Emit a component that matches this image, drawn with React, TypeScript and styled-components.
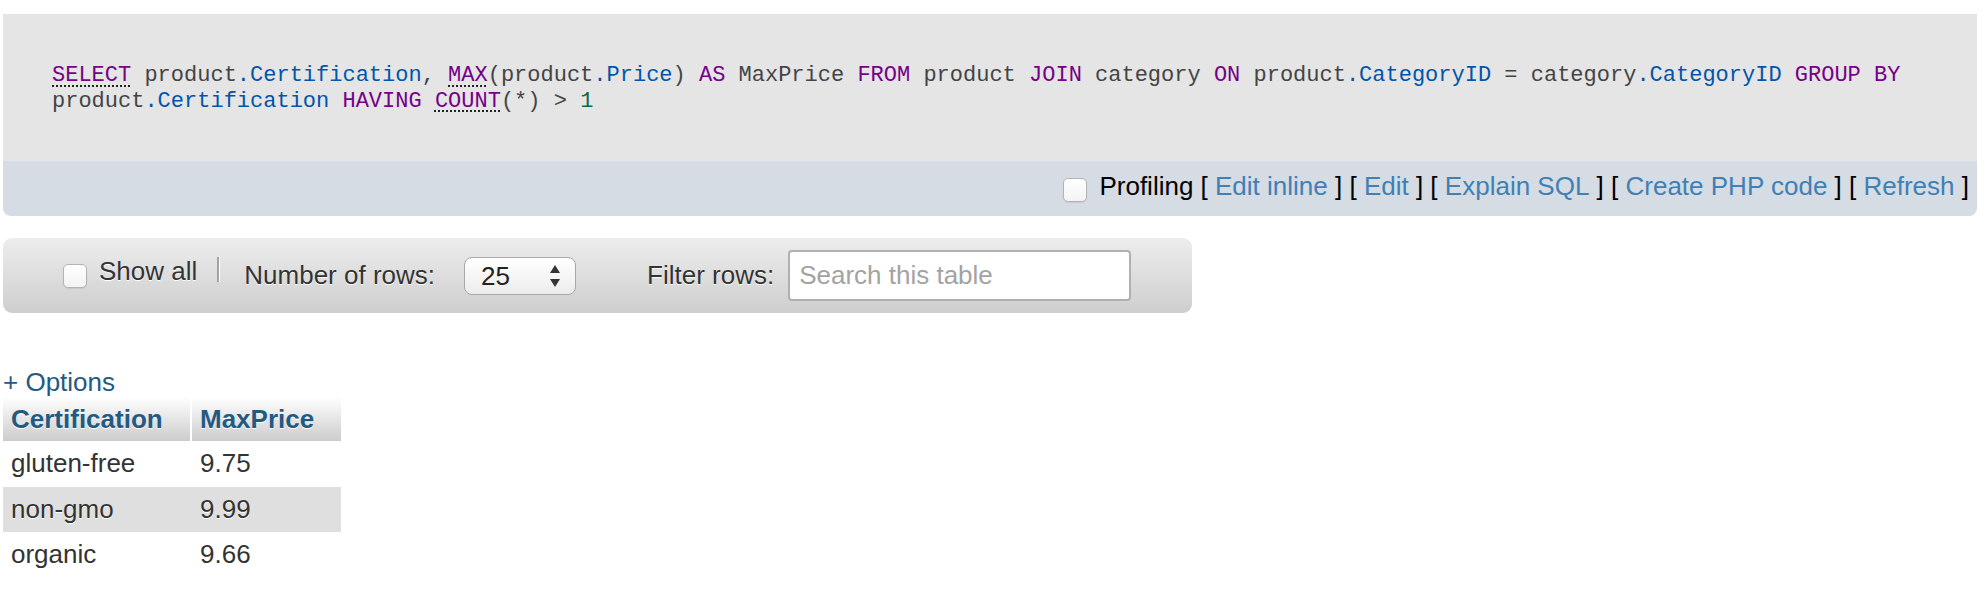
import React from "react";
import styled, { createGlobalStyle } from "styled-components";

const Global = createGlobalStyle`
  html, body { margin: 0; padding: 0; background: #fff; }
  body { font-family: "Liberation Sans", Arial, sans-serif; color: #333; }
`;

const Page = styled.div`
  padding: 14px 11px 0 3px;
`;

const SqlBox = styled.div`
  border-radius: 0 0 8px 8px;
  overflow: hidden;
`;

const Code = styled.div`
  background: #e5e5e5;
  height: 147px;
  box-sizing: border-box;
  padding: 49px 49px 0 49px;
  font-family: "Liberation Mono", "Courier New", monospace;
  font-size: 22px;
  line-height: 25.5px;
  color: #444;
`;

const Kw = styled.span<{ $doc?: boolean }>`
  color: #770088;
  ${(p) =>
    p.$doc
      ? `text-decoration: underline dotted #222; text-decoration-thickness: 2px; text-underline-offset: 4px;`
      : ""}
`;
const Field = styled.span`
  color: #0055aa;
`;
const Num = styled.span`
  color: #116644;
`;

const Tools = styled.div`
  background: #d5dce3;
  height: 55px;
  box-sizing: border-box;
  padding: 0 8px 4px 0;
  display: flex;
  align-items: center;
  justify-content: flex-end;
  font-size: 26px;
  color: #000;
  white-space: pre;
`;

const Check = styled.input.attrs({ type: "checkbox" })<{ $down?: number }>`
  appearance: none;
  -webkit-appearance: none;
  margin: ${(p) => p.$down ?? 0}px 12px 0 0;
  width: 24px;
  height: 24px;
  box-sizing: border-box;
  border: 1px solid #b3b3b3;
  border-radius: 5px;
  background: linear-gradient(#ffffff, #f3f3f3);
  box-shadow: 0 1px 1px rgba(0, 0, 0, 0.08);
  flex: none;
`;

const ToolLink = styled.a`
  color: #3f80b5;
  text-decoration: none;
  cursor: pointer;
`;

const Nav = styled.div`
  margin-top: 22px;
  width: 1189px;
  height: 75px;
  box-sizing: border-box;
  border-radius: 9px;
  background: linear-gradient(#ededed, #cecece);
  display: flex;
  align-items: center;
  padding-left: 60px;
  font-size: 26px;
  color: #333;
  text-shadow: 0 1px 0 #fff;
`;

const NavLabel = styled.span<{ $ml?: number; $up?: number }>`
  margin-left: ${(p) => p.$ml ?? 0}px;
  position: relative;
  top: ${(p) => -(p.$up ?? 0)}px;
  white-space: nowrap;
`;

const Sep = styled.span`
  margin-left: 20px;
  width: 2px;
  height: 25px;
  background: #a3a3a3;
  box-shadow: 1px 0 0 #fff;
  align-self: flex-start;
  margin-top: 19px;
`;

const SelectWrap = styled.div`
  margin-left: 29px;
  width: 112px;
  height: 38px;
  box-sizing: border-box;
  border: 1px solid #a8a8a8;
  border-radius: 8px;
  background: linear-gradient(#ffffff, #ececec);
  display: flex;
  align-items: center;
  padding: 0 14px 0 0;
`;

const Select = styled.select`
  appearance: none;
  -webkit-appearance: none;
  border: none;
  background: transparent;
  font-family: "Liberation Sans", Arial, sans-serif;
  font-size: 26px;
  color: #222;
  padding: 0 0 0 16px;
  flex: 1;
  min-width: 0;
  outline: none;
`;

const Search = styled.input`
  margin-left: 14px;
  width: 343px;
  height: 51px;
  box-sizing: border-box;
  border: 2px solid #b0b0b0;
  border-radius: 4px;
  background: #fff;
  font-family: "Liberation Sans", Arial, sans-serif;
  font-size: 26px;
  padding: 0 9px;
  color: #333;
  &::placeholder {
    color: #a3a3a3;
  }
`;

const Options = styled.a`
  display: block;
  margin-top: 55px;
  font-size: 26px;
  line-height: 29px;
  color: #235a81;
  text-decoration: none;
`;

const Table = styled.table`
  border-collapse: separate;
  border-spacing: 0;
  font-size: 26px;
`;

const Th = styled.th<{ $w: number; $sep?: boolean }>`
  width: ${(p) => p.$w}px;
  height: 44px;
  box-sizing: border-box;
  padding: 0 8px;
  text-align: left;
  font-weight: bold;
  color: #235a81;
  text-shadow: 0 1px 0 #fff;
  background: linear-gradient(#ffffff, #cccccc);
  border-right: ${(p) => (p.$sep ? "2px solid #fff" : "none")};
`;

const Tr = styled.tr<{ $odd?: boolean }>`
  background: ${(p) => (p.$odd ? "#dfdfdf" : "#fff")};
`;

const Td = styled.td`
  height: 45.6px;
  padding: 0 8px;
  color: #333;
  text-shadow: 0 1px 0 #fff;
`;

const Arrows = () => (
  <svg width="12" height="24" viewBox="0 0 12 24" aria-hidden="true">
    <polygon points="6,1 11,9 1,9" fill="#333" />
    <polygon points="1,15 11,15 6,23" fill="#333" />
  </svg>
);

const rows = [
  ["gluten-free", "9.75"],
  ["non-gmo", "9.99"],
  ["organic", "9.66"],
];

export default function App() {
  return (
    <>
      <Global />
      <Page>
        <SqlBox>
          <Code>
            <Kw $doc>SELECT</Kw> product<Field>.Certification</Field>, <Kw $doc>MAX</Kw>(product
            <Field>.Price</Field>) <Kw>AS</Kw> MaxPrice <Kw>FROM</Kw> product <Kw>JOIN</Kw> category{" "}
            <Kw>ON</Kw> product<Field>.CategoryID</Field> = category<Field>.CategoryID</Field>{" "}
            <Kw>GROUP BY</Kw> product<Field>.Certification</Field> <Kw>HAVING</Kw>{" "}
            <Kw $doc>COUNT</Kw>(*) &gt; <Num>1</Num>
          </Code>
          <Tools>
            <Check $down={6} />
            Profiling [ <ToolLink>Edit inline</ToolLink> ] [ <ToolLink>Edit</ToolLink> ] [{" "}
            <ToolLink>Explain SQL</ToolLink> ] [ <ToolLink>Create PHP code</ToolLink> ] [{" "}
            <ToolLink>Refresh</ToolLink> ]
          </Tools>
        </SqlBox>
        <Nav>
          <Check />
          <NavLabel $up={4}>Show all</NavLabel>
          <Sep />
          <NavLabel $ml={25}>Number of rows:</NavLabel>
          <SelectWrap>
            <Select defaultValue="25">
              <option value="25">25</option>
              <option value="50">50</option>
              <option value="100">100</option>
              <option value="250">250</option>
              <option value="500">500</option>
            </Select>
            <Arrows />
          </SelectWrap>
          <NavLabel $ml={71}>Filter rows:</NavLabel>
          <Search placeholder="Search this table" />
        </Nav>
        <Options>+ Options</Options>
        <Table>
          <thead>
            <tr>
              <Th $w={189} $sep>
                Certification
              </Th>
              <Th $w={149}>MaxPrice</Th>
            </tr>
          </thead>
          <tbody>
            {rows.map((r, i) => (
              <Tr key={r[0]} $odd={i % 2 === 1}>
                <Td>{r[0]}</Td>
                <Td>{r[1]}</Td>
              </Tr>
            ))}
          </tbody>
        </Table>
      </Page>
    </>
  );
}
